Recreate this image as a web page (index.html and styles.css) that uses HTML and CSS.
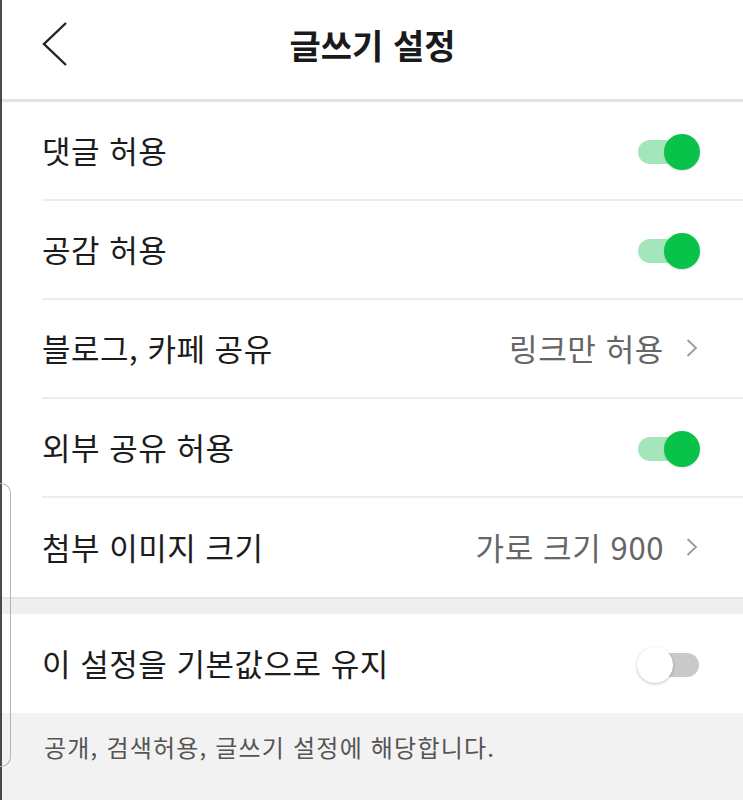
FILE: index.html
```html
<!DOCTYPE html>
<html lang="ko">
<head>
  <meta charset="UTF-8" />
  <title>글쓰기 설정</title>
  <meta name="viewport" content="width=device-width, initial-scale=1.0"/>
  <link rel="stylesheet" href="styles.css">
</head>
<body>

  <div class="page">
    <div class="side-button"></div>

    <div class="header">
      <button class="back" aria-label="뒤로">
        <svg width="26" height="46" viewBox="0 0 26 46">
          <polyline points="24,2 2,23 24,44" fill="none" stroke="#222" stroke-width="2.4"/>
        </svg>
      </button>
      <h1>글쓰기 설정</h1>
    </div>

    <ul class="settings">
      <li class="row">
        <span class="label">댓글 허용</span>
        <span class="toggle on"></span>
      </li>
      <li class="row">
        <span class="label">공감 허용</span>
        <span class="toggle on"></span>
      </li>
      <li class="row">
        <span class="label">블로그, 카페 공유</span>
        <span class="value">링크만 허용
          <svg class="chev" width="12" height="22" viewBox="0 0 12 22">
            <polyline points="1.5,3 10,11 1.5,19" fill="none" stroke="#9a9a9a" stroke-width="1.8"/>
          </svg>
        </span>
      </li>
      <li class="row">
        <span class="label">외부 공유 허용</span>
        <span class="toggle on"></span>
      </li>
      <li class="row last">
        <span class="label">첨부 이미지 크기</span>
        <span class="value">가로 크기 900
          <svg class="chev" width="12" height="22" viewBox="0 0 12 22">
            <polyline points="1.5,3 10,11 1.5,19" fill="none" stroke="#9a9a9a" stroke-width="1.8"/>
          </svg>
        </span>
      </li>
    </ul>

    <div class="gap"></div>

    <ul class="settings">
      <li class="row last">
        <span class="label">이 설정을 기본값으로 유지</span>
        <span class="toggle"></span>
      </li>
    </ul>

    <div class="footer">
      <p>공개, 검색허용, 글쓰기 설정에 해당합니다.</p>
    </div>
  </div>

</body>
</html>
```

FILE: styles.css
```css
* {
  box-sizing: border-box;
}

body {
  margin: 0;
  font-family: "Noto Sans CJK KR", "Noto Sans", sans-serif;
  background-color: #f2f2f2;
  color: #1c1c1c;
}

.page {
  position: relative;
  min-height: 800px;
  border-left: 2px solid #4a4a4a;
  background-color: #f2f2f2;
}

/* phone side button shadow on the left edge */
.side-button {
  position: absolute;
  left: -2px;
  top: 483px;
  width: 11px;
  height: 284px;
  border: 1.5px solid #b5b5b5;
  border-left: none;
  border-radius: 0 10px 10px 0;
  z-index: 2;
}

.header {
  height: 102px;
  background-color: #fff;
  border-bottom: 3px solid #e2e2e2;
  display: flex;
  align-items: center;
  justify-content: center;
  position: relative;
}

.header h1 {
  margin: 0 0 10px;
  font-size: 34px;
  font-weight: 700;
  color: #1a1a1a;
}

.back {
  position: absolute;
  left: 40px;
  top: 21px;
  padding: 0;
  border: none;
  background: none;
}

.settings {
  list-style: none;
  margin: 0;
  padding: 0 0 0 40px;
  background-color: #fff;
}

.row {
  height: 99px;
  display: flex;
  align-items: center;
  justify-content: space-between;
  padding-right: 44px;
  border-bottom: 2px solid #ececec;
}

.row.last {
  border-bottom: none;
}

.label {
  font-size: 31px;
  letter-spacing: 0.5px;
  margin-bottom: 2px;
}

.value {
  font-size: 31px;
  letter-spacing: 0.6px;
  color: #666;
  display: flex;
  align-items: center;
  margin-bottom: 2px;
}

.chev {
  margin-left: 22px;
  margin-right: 1px;
}

.toggle {
  position: relative;
  width: 61px;
  height: 24px;
  border-radius: 12px;
  background-color: #c9c9c9;
  margin-left: 10px;
  margin-top: 2px;
}

.toggle::after {
  content: "";
  position: absolute;
  top: -6px;
  left: -1px;
  width: 36px;
  height: 36px;
  border-radius: 50%;
  background-color: #fff;
  box-shadow: 0 1px 3px rgba(0, 0, 0, 0.25);
}

.toggle.on {
  background-color: #a3e6ba;
}

.toggle.on::after {
  left: auto;
  right: -1px;
  background-color: #09c24a;
  box-shadow: 0 1px 2px rgba(0, 0, 0, 0.12);
}

.gap {
  height: 17px;
  background-color: #efefef;
  border-top: 2px solid #e6e6e6;
}

.footer {
  background-color: #f2f2f2;
  padding: 16px 0 30px 42px;
}

.footer p {
  margin: 0;
  font-size: 24px;
  letter-spacing: 1.2px;
  color: #555;
}
```
